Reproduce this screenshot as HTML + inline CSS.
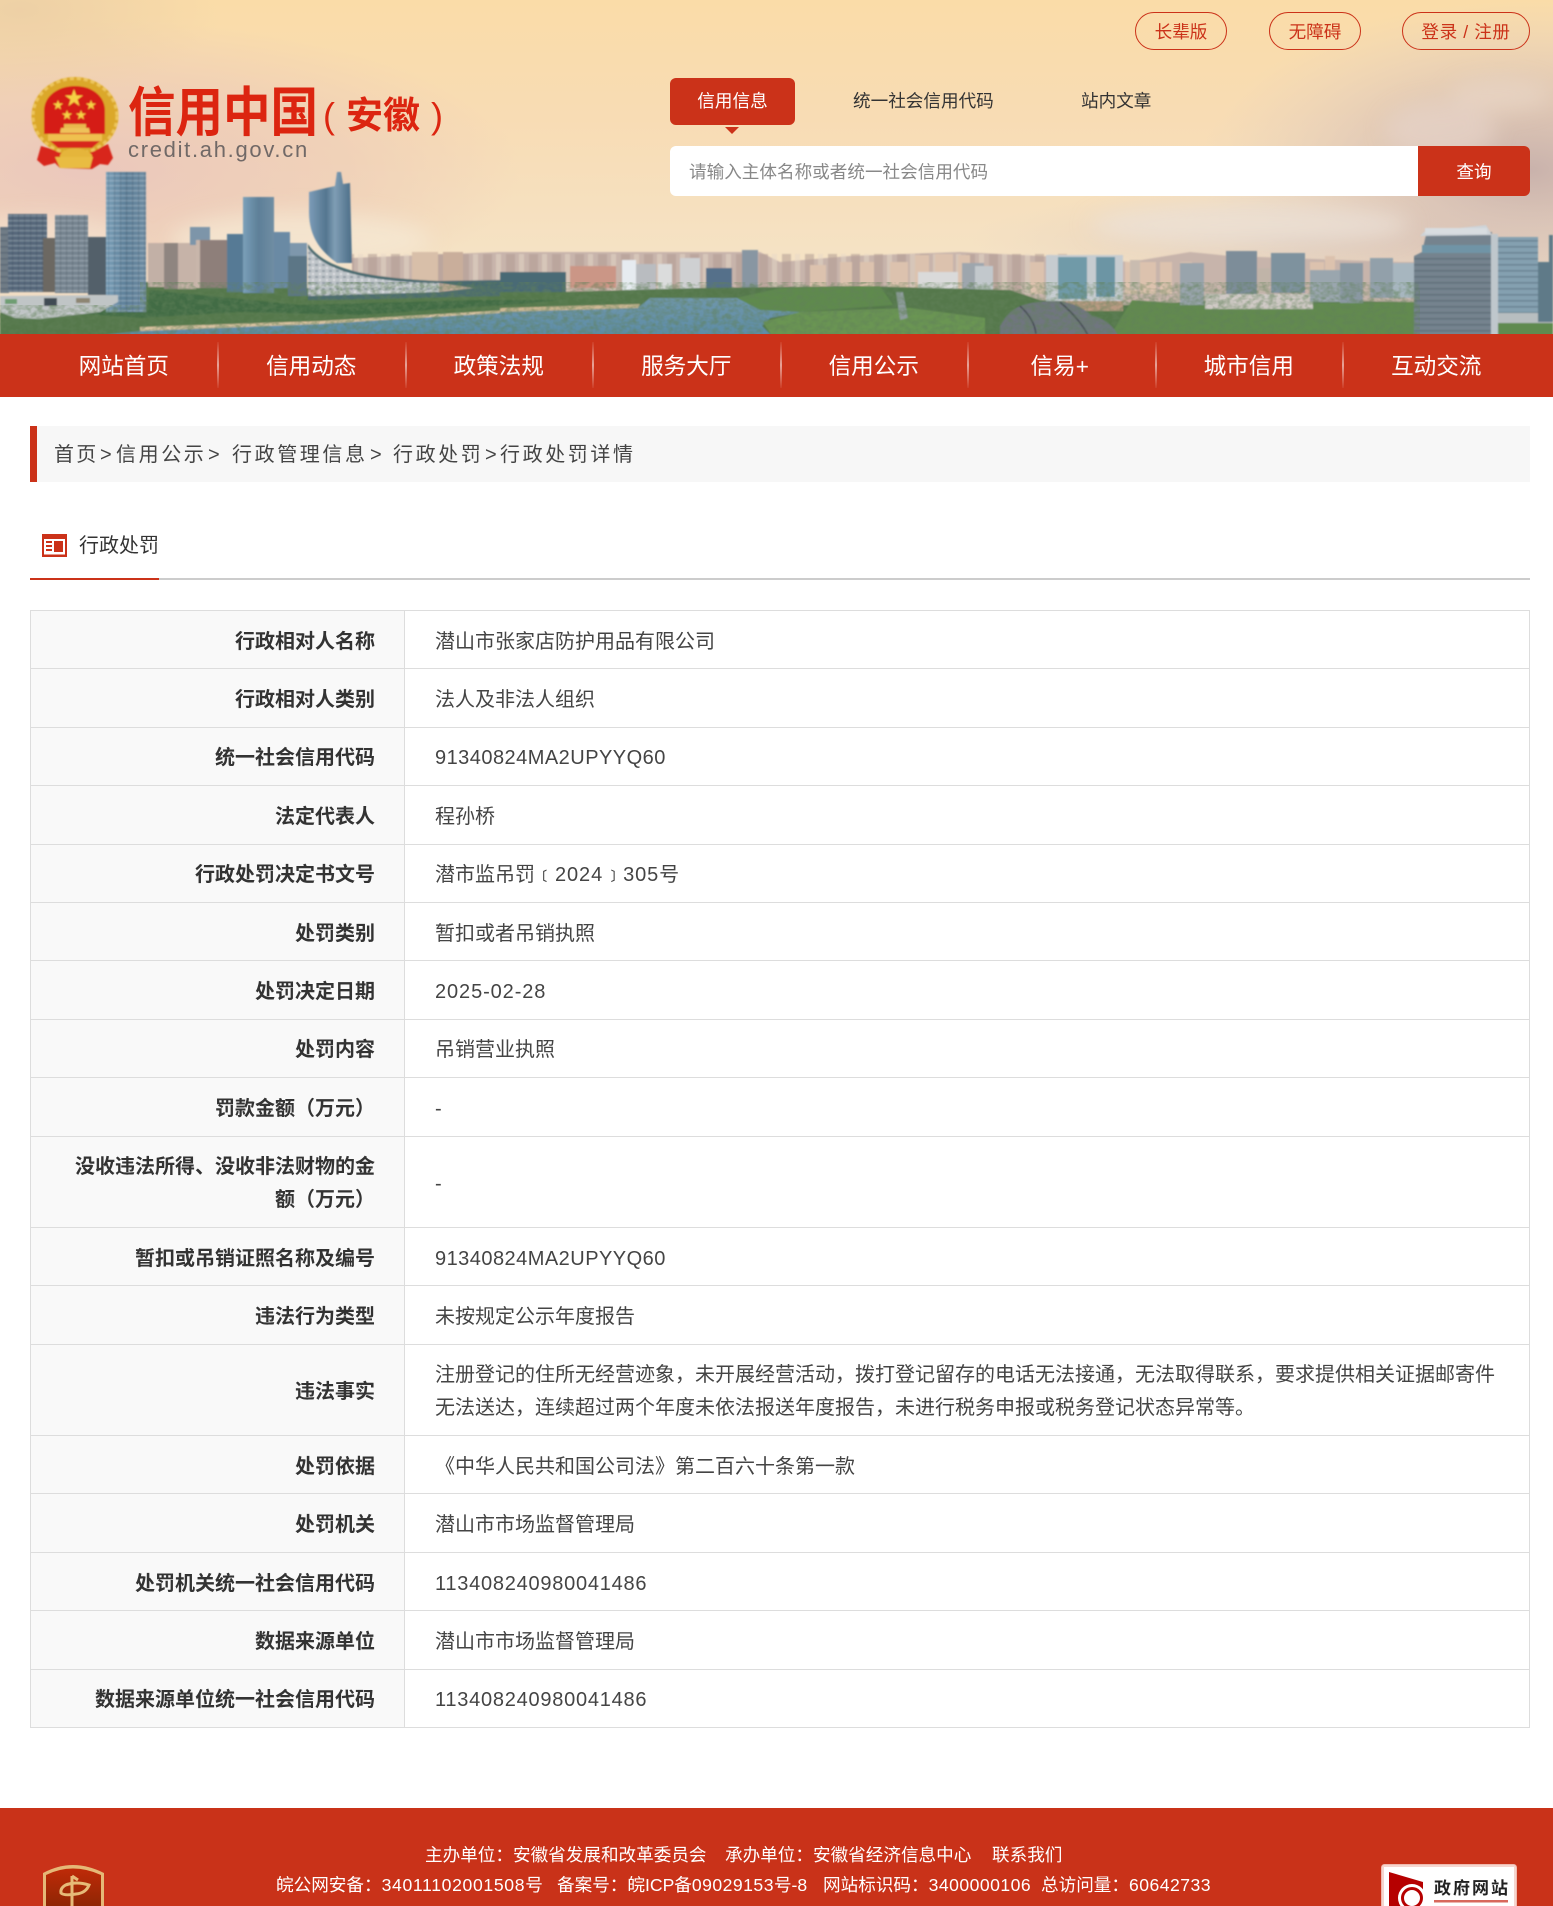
<!DOCTYPE html>
<html lang="zh-CN">
<head>
<meta charset="utf-8">
<title>行政处罚详情</title>
<style>
html,body{margin:0;padding:0;background:#fff}
body{width:1553px;height:1906px;position:relative;overflow:hidden;font-family:"Liberation Sans","Noto Sans CJK SC",sans-serif;color:#333}
.a{position:absolute;white-space:nowrap}
.pill{position:absolute;top:12px;height:38px;box-sizing:border-box;border:1px solid #cb3219;border-radius:19px;color:#cb3219;font-size:17.6px;line-height:38px;text-align:center}
.nav{position:absolute;left:0;top:334px;width:1553px;height:63px;background:#cb3219}
.nav span{position:absolute;top:0;width:187.5px;text-align:center;color:#fff;font-size:22.6px;line-height:66px}
.nav i{position:absolute;top:8px;width:2px;height:46px;background:linear-gradient(to bottom,rgba(255,255,255,.05),rgba(255,255,255,.55) 50%,rgba(255,255,255,.05))}
.bc{position:absolute;top:427px;font-size:20px;line-height:56px;color:#444;letter-spacing:2.6px;white-space:nowrap}
.tbl{position:absolute;left:30px;top:610px;width:1500px;box-sizing:border-box;border:1px solid #ddd;border-bottom:0}
.r{display:flex;height:58.4px;box-sizing:border-box;border-bottom:1px solid #ddd;font-size:20px;line-height:33px}
.r.d{height:91.4px}
.l{width:374px;flex:none;box-sizing:border-box;background:#f9f9f9;border-right:1px solid #ddd;text-align:right;padding:5px 29px 0 0;font-weight:700;color:#333;display:flex;align-items:center;justify-content:flex-end}
.v{flex:1;padding:5px 0 0 30px;color:#444;display:flex;align-items:center}
.n{letter-spacing:.47px}
.m{letter-spacing:.75px}
.t{letter-spacing:.9px}
.foot{position:absolute;left:0;top:1808px;width:1553px;height:98px;background:#c93219;overflow:hidden}
.foot .a{color:#fff;font-size:17.6px;line-height:24px}
</style>
</head>
<body>

<svg class="a" style="left:0;top:0" width="1553" height="336" viewBox="0 0 1553 336" xmlns="http://www.w3.org/2000/svg">
<defs>
<linearGradient id="sky" x1="0" y1="0" x2="0" y2="1"><stop offset="0" stop-color="#fadca8"/><stop offset=".35" stop-color="#f8dcb4"/><stop offset=".75" stop-color="#f5e2c4"/><stop offset="1" stop-color="#f3e6cc"/></linearGradient>
<radialGradient id="pl"><stop offset="0" stop-color="#eac6bc" stop-opacity=".95"/><stop offset=".6" stop-color="#eccab8" stop-opacity=".6"/><stop offset="1" stop-color="#eccab8" stop-opacity="0"/></radialGradient>
<radialGradient id="pr"><stop offset="0" stop-color="#c4adaa" stop-opacity=".9"/><stop offset=".55" stop-color="#d6c0b8" stop-opacity=".55"/><stop offset="1" stop-color="#e0cfc4" stop-opacity="0"/></radialGradient>
<radialGradient id="tl"><stop offset="0" stop-color="#eccfa6" stop-opacity=".9"/><stop offset="1" stop-color="#eccfa6" stop-opacity="0"/></radialGradient>
<linearGradient id="tower" x1="0" y1="0" x2="1" y2="0"><stop offset="0" stop-color="#7ba0b9"/><stop offset=".5" stop-color="#5d7f98"/><stop offset="1" stop-color="#6f8da3"/></linearGradient>
<linearGradient id="curve" x1="0" y1="0" x2="1" y2="0"><stop offset="0" stop-color="#7c9cb8"/><stop offset=".4" stop-color="#54768f"/><stop offset=".6" stop-color="#7f9db4"/><stop offset="1" stop-color="#4a6c86"/></linearGradient>
<linearGradient id="water" x1="0" y1="0" x2="0" y2="1"><stop offset="0" stop-color="#6f96ab"/><stop offset="1" stop-color="#5d8ca6"/></linearGradient>
<pattern id="win" width="6" height="5" patternUnits="userSpaceOnUse"><rect x="0" y="0" width="6" height="1.4" fill="#dfe6ea" opacity=".28"/><rect x="0" y="0" width="1.2" height="5" fill="#2e3e4c" opacity=".2"/></pattern>
<pattern id="lin" width="8" height="6" patternUnits="userSpaceOnUse"><rect x="0" y="0" width="8" height="1.6" fill="#33424f" opacity=".28"/></pattern>
<pattern id="pod" width="7" height="6" patternUnits="userSpaceOnUse"><rect x="0" y="0" width="3" height="2" fill="#5a6b78" opacity=".45"/><rect x="4" y="3" width="2" height="2" fill="#fff" opacity=".5"/></pattern>
<pattern id="far" width="23" height="40" patternUnits="userSpaceOnUse"><rect x="0" width="9" height="40" fill="#b19a92" opacity=".55"/><rect x="13" width="5" height="40" fill="#e8d8c8" opacity=".5"/></pattern>
<filter id="b1"><feGaussianBlur stdDeviation=".7"/></filter>
<filter id="b2"><feGaussianBlur stdDeviation="10"/></filter>
<filter id="noise" x="0" y="0" width="100%" height="100%"><feTurbulence type="fractalNoise" baseFrequency=".16 .2" numOctaves="2" seed="4"/><feColorMatrix type="matrix" values="0 0 0 0 .12  0 0 0 0 .22  0 0 0 0 .1  1.6 1.6 0 0 -1.2"/></filter>
</defs>
<rect width="1553" height="336" fill="url(#sky)"/>
<g>
<ellipse cx="90" cy="170" rx="430" ry="150" fill="url(#pl)"/>
<ellipse cx="20" cy="10" rx="200" ry="90" fill="url(#tl)"/>
<ellipse cx="1530" cy="170" rx="330" ry="170" fill="url(#pr)"/>
<ellipse cx="1300" cy="240" rx="330" ry="55" fill="url(#pr)" opacity=".45"/>
<g filter="url(#b2)">
<ellipse cx="300" cy="240" rx="130" ry="28" fill="#f6e8d4" opacity=".75"/>
<ellipse cx="40" cy="245" rx="100" ry="28" fill="#f4e2d0" opacity=".7"/>
<ellipse cx="1440" cy="130" rx="55" ry="28" fill="#e6d3c8" opacity=".7"/>
<ellipse cx="1500" cy="95" rx="50" ry="16" fill="#e8d5c6" opacity=".7"/>
<ellipse cx="1250" cy="225" rx="160" ry="22" fill="#ece3d8" opacity=".7"/>
</g>
</g>

<g filter="url(#b1)">
<!-- distant hills / skyline -->
<path d="M352 258 L500 252 L760 252 L780 262 L850 256 L960 252 L1080 258 L1130 262 L1190 252 L1230 256 L1400 262 L1553 262 L1553 320 L352 320Z" fill="#c7b4ab"/>
<rect x="352" y="254" width="720" height="40" fill="url(#far)"/>
<g fill="#dcc2ae">
<rect x="810" y="265" width="16" height="36"/><rect x="840" y="262" width="12" height="38"/><rect x="860" y="262" width="14" height="38"/><rect x="890" y="262" width="18" height="38"/><rect x="915" y="255" width="14" height="45"/><rect x="935" y="254" width="18" height="46"/><rect x="958" y="255" width="12" height="45"/>
<rect x="1030" y="262" width="14" height="32"/><rect x="1125" y="262" width="12" height="32"/><rect x="1140" y="262" width="16" height="32"/><rect x="1160" y="262" width="12" height="32"/><rect x="1180" y="262" width="12" height="34"/><rect x="1310" y="262" width="14" height="30"/><rect x="1325" y="256" width="10" height="36"/>
</g>
<rect x="742" y="250" width="16" height="38" fill="#8896a2"/>
<rect x="412" y="252" width="26" height="42" fill="#d8bfa9"/><rect x="443" y="252" width="20" height="42" fill="#c9ae9b"/>
<!-- mid-colour blocks -->
<rect x="500" y="272" width="66" height="26" fill="#4a6a74"/>
<rect x="570" y="266" width="46" height="22" fill="#cb9686"/>
<rect x="622" y="260" width="14" height="30" fill="#e6ebf0"/>
<rect x="636" y="264" width="20" height="26" fill="#b9bcc0"/>
<rect x="658" y="264" width="14" height="26" fill="#dbdcdc"/>
<rect x="680" y="258" width="20" height="32" fill="#cfd0d2"/>
<rect x="706" y="268" width="26" height="20" fill="#55708a"/>
<rect x="918" y="272" width="40" height="24" fill="#dadada"/>
<rect x="962" y="263" width="22" height="34" fill="#9ea6ad"/>
<rect x="975" y="266" width="18" height="30" fill="#c2c8cc"/>
<rect x="908" y="292" width="76" height="14" fill="#c9c6c3"/>
<!-- green -->
<path d="M146 282 L300 288 L420 292 L560 292 L700 288 L860 286 L1010 290 L1040 300 L1125 305 L1230 300 L1420 302 L1420 336 L0 336 L0 310 L110 308Z" fill="#55784b"/>
<path d="M0 312 L60 312 L140 318 L240 312 L360 315 L520 304 L560 300 L480 300 L300 305 L150 290 L146 310 L0 310Z" fill="#436c45"/>
<path d="M1110 336 L1132 300 L1190 304 L1420 302 L1420 336Z" fill="#628a50"/>
<path d="M1500 316 L1553 318 L1553 336 L1490 336Z" fill="#5e8a50"/>
<!-- water -->
<path d="M95 336 L140 331 L320 322 L500 312 L640 306 L650 298 L770 298 L808 311 L770 318 L762 326 L772 336Z" fill="url(#water)"/>
<!-- island -->
<path d="M737 298 L780 288 L880 286 L893 305 L800 312 L760 310Z" fill="#5f8a4e"/>
<path d="M763 322 L800 312 L910 308 L985 318 L985 336 L772 336Z" fill="#6b9552"/>
<path d="M896 292 L903 292 L908 318 L900 320Z" fill="#8e9c9c"/>
<!-- sand -->
<path d="M140 327 L320 321 L500 310.5 L500 313 L320 324 L140 331Z" fill="#d9c2a0"/>
<path d="M500 308 L640 304 L638 308 L500 312Z" fill="#cdb894"/>
<!-- left towers -->
<rect x="0" y="227" width="9" height="66" fill="#6f7c86"/><rect x="0" y="227" width="9" height="66" fill="url(#lin)"/>
<rect x="8" y="214" width="39" height="78" fill="#56687a"/><rect x="8" y="214" width="39" height="78" fill="url(#win)"/>
<rect x="43" y="238" width="12" height="54" fill="#6c6862"/>
<rect x="55" y="215" width="33" height="78" fill="#76848f"/><rect x="55" y="215" width="33" height="78" fill="url(#win)"/>
<rect x="88" y="237" width="18" height="58" fill="#52606a"/>
<rect x="148" y="243" width="16" height="44" fill="#c2b0a6"/><rect x="164" y="243" width="14" height="46" fill="#8f8580"/><rect x="178" y="243" width="18" height="46" fill="#c6b3a8"/>
<rect x="190" y="227" width="20" height="18" fill="#7d95a9"/>
<rect x="196" y="240" width="31" height="48" fill="#8e7f7a"/><rect x="196" y="240" width="4" height="48" fill="#c8b6aa"/>
<rect x="227" y="234" width="16" height="58" fill="#567a95"/>
<rect x="243" y="197" width="31" height="96" fill="url(#tower)"/>
<rect x="274" y="232" width="16" height="56" fill="#6a8aa4"/>
<rect x="290" y="243" width="17" height="16" fill="#7e97ac"/>
<rect x="288" y="256" width="19" height="40" fill="#5c7686"/>
<rect x="106" y="172" width="40" height="140" fill="url(#tower)"/><rect x="106" y="172" width="40" height="140" fill="url(#win)"/>
<!-- curved tower -->
<path d="M309 192 L335 186 L337 172 L341 172 L343 184 L350 183 L352 263 L337 263 C322 252 309 238 309 212Z" fill="url(#curve)"/>
<path d="M308 244 C325 272 370 282 439 282 L439 292 L308 298Z" fill="#bfc5c9"/>
<path d="M308 244 C325 272 370 282 439 282 L439 292 L308 298Z" fill="url(#pod)"/>
<path d="M308 244 C325 270 370 278 439 281 L500 280 L500 292 L439 283 C370 282 325 272 308 248Z" fill="#4a6a70"/>
<path d="M308 296 L439 292 L500 285 L500 296 L330 300 L308 300Z" fill="#4d6d6e"/>
<!-- mall -->
<path d="M0 296 L118 295 L118 302 L100 312 L40 319 L15 318 L0 312Z" fill="#c0c5c6"/>
<rect x="44" y="298" width="13" height="8" fill="#3f4b53"/><rect x="5" y="299" width="12" height="5" fill="#6e9e72"/><rect x="76" y="298" width="14" height="5" fill="#8d8572"/>
<!-- right side buildings -->
<rect x="1046" y="255" width="77" height="46" fill="#c6ccd0"/>
<rect x="1058" y="257" width="29" height="42" fill="#6f9aa8"/>
<rect x="1096" y="257" width="19" height="40" fill="#6c95a4"/>
<rect x="1063" y="301" width="60" height="10" fill="#b79a82"/>
<rect x="1180" y="263" width="24" height="42" fill="#99a4ac"/>
<rect x="1130" y="260" width="10" height="30" fill="#c9bcb0"/>
<rect x="1226" y="251" width="31" height="46" fill="#7d8d99"/>
<rect x="1258" y="268" width="12" height="25" fill="#c0b4a8"/>
<rect x="1271" y="253" width="34" height="40" fill="#7e929e"/>
<rect x="1205" y="294" width="108" height="15" fill="#cfc9c5"/>
<rect x="1340" y="263" width="23" height="40" fill="#8a98a2"/>
<rect x="1370" y="258" width="23" height="40" fill="#92a0aa"/>
<rect x="1393" y="263" width="21" height="35" fill="#a7b6bf"/>
<rect x="1310" y="270" width="30" height="32" fill="#9aa6ae"/>
<!-- opera -->
<path d="M1000 326 C1010 308 1020 303 1050 301 C1075 300 1088 312 1092 316 C1105 318 1115 328 1118 336 L1000 336Z" fill="#70767f"/>
<path d="M1020 306 C1030 315 1035 325 1036 334 M1060 302 C1075 315 1085 328 1088 336" stroke="#3f4550" stroke-width="1.5" fill="none"/>
<!-- big hotel -->
<rect x="1492" y="237" width="46" height="80" fill="#84a0b0"/><rect x="1492" y="237" width="46" height="80" fill="url(#lin)"/>
<rect x="1495" y="313" width="58" height="10" fill="#b8bec0"/>
<rect x="1538" y="262" width="15" height="60" fill="#5f7a88"/><rect x="1549" y="235" width="4" height="30" fill="#5f7a88"/>
<path d="M1426 235 L1492 232 L1492 336 L1414 336 L1414 256 L1422 252Z" fill="#75838e"/>
<rect x="1414" y="256" width="78" height="80" fill="url(#lin)"/>
<rect x="1422" y="245" width="70" height="8" fill="#6f94a6"/>
<path d="M1420 236 L1424 232 L1486 225 L1492 235 Z" fill="#cdd3d8"/>
<rect x="1491" y="234" width="7" height="102" fill="#bfc7cc"/>
<rect x="1425" y="228" width="62" height="6" fill="#d8dde0"/>
</g>
<rect x="140" y="282" width="1280" height="54" filter="url(#noise)" opacity=".5"/>
<rect x="0" y="305" width="140" height="31" filter="url(#noise)" opacity=".5"/>
<!-- emblem -->
<g filter="url(#b1)">
<path d="M41 146 L37 160 L44 166 L55 163 L60 168 L92 169 L100 164 L108 165 L113 158 L108 144 L95 150 L55 150Z" fill="#d8261a"/>
<ellipse cx="75" cy="116" rx="43.5" ry="39" fill="#dba82a"/>
<ellipse cx="75" cy="116" rx="42" ry="37.500" fill="none" stroke="#edc65c" stroke-width="3" stroke-dasharray="4 3"/>
<path d="M44 111 C44 96 58 86 75 86 C92 86 105 96 105 111 L105 134 L44 134Z" fill="#d51f14"/>
<rect x="48" y="134" width="54" height="7" fill="#efc04f"/>
<path d="M50 141 L100 141 L92 148 L58 148Z" fill="#d8261a"/>
<path d="M60 133 L61 128 L89 128 L90 133Z" fill="#eec25a"/>
<rect x="64" y="124" width="22" height="4" fill="#e9b84d"/>
<path d="M60 155 C65 146 85 146 92 155 L92 158 L60 158Z" fill="#e5b53a"/>
<path d="M55 157 L93 157 L90 168 L60 168Z" fill="#e9bc42"/>
<path d="M74 89 L76.300 95.500 L83 95.500 L77.500 99.500 L79.500 106 L74 102 L68.500 106 L70.500 99.500 L65 95.500 L71.700 95.500Z" fill="#f6d144"/>
<path d="M58 100 L59.300 103.500 L63 103.500 L60 105.800 L61 109.500 L58 107.200 L55 109.500 L56 105.800 L53 103.500 L56.700 103.500Z" fill="#f6d144"/>
<path d="M91 100 L92.300 103.500 L96 103.500 L93 105.800 L94 109.500 L91 107.200 L88 109.500 L89 105.800 L86 103.500 L89.700 103.500Z" fill="#f6d144"/>
<path d="M67 110 L68.300 113.500 L72 113.500 L69 115.800 L70 119.500 L67 117.200 L64 119.500 L65 115.800 L62 113.500 L65.700 113.500Z" fill="#f6d144"/>
<path d="M81 110 L82.300 113.500 L86 113.500 L83 115.800 L84 119.500 L81 117.200 L78 119.500 L79 115.800 L76 113.500 L79.700 113.500Z" fill="#f6d144"/>
</g>
<!-- logo text -->
<text transform="translate(128,131) scale(1,1.14)" font-family="'Liberation Sans','Noto Sans CJK SC',sans-serif" font-size="47" font-weight="700" fill="#dc2510" textLength="190" lengthAdjust="spacingAndGlyphs">信用中国</text>
<text x="323" y="128" font-family="'Liberation Sans','Noto Sans CJK SC',sans-serif" font-size="36" fill="#dc2510">(</text>
<text x="346" y="128" font-family="'Liberation Sans','Noto Sans CJK SC',sans-serif" font-size="37" font-weight="700" fill="#dc2510">安徽</text>
<text x="431" y="128" font-family="'Liberation Sans','Noto Sans CJK SC',sans-serif" font-size="36" fill="#dc2510">)</text>
<text x="128" y="157" font-family="'Liberation Sans',sans-serif" font-size="22" letter-spacing="1.7" fill="#716967">credit.ah.gov.cn</text>
</svg>

<div class="pill" style="left:1135px;width:92px">长辈版</div>
<div class="pill" style="left:1269px;width:92px">无障碍</div>
<div class="pill" style="left:1402px;width:128px;letter-spacing:.6px">登录 / 注册</div>

<div class="a" style="left:670px;top:78px;width:125px;height:47px;background:#cb3219;border-radius:6px;color:#fff;font-size:17.6px;line-height:47px;text-align:center">信用信息</div>
<div class="a" style="left:725px;top:127px;width:0;height:0;border-left:7px solid transparent;border-right:7px solid transparent;border-top:7px solid #cb3219"></div>
<div class="a" style="left:853px;top:78px;color:#333;font-size:17.6px;line-height:47px">统一社会信用代码</div>
<div class="a" style="left:1081px;top:78px;color:#333;font-size:17.6px;line-height:47px">站内文章</div>

<div class="a" style="left:670px;top:146px;width:748px;height:50px;background:#fff;border-radius:6px 0 0 6px;color:#888;font-size:17.6px;line-height:52px;text-indent:19px">请输入主体名称或者统一社会信用代码</div>
<div class="a" style="left:1418px;top:146px;width:112px;height:50px;background:#cb3219;border-radius:0 6px 6px 0;color:#fff;font-size:17.6px;line-height:52px;text-align:center">查询</div>

<div class="nav">
<span style="left:30px">网站首页</span><i style="left:217px"></i>
<span style="left:217.5px">信用动态</span><i style="left:405px"></i>
<span style="left:405px">政策法规</span><i style="left:592px"></i>
<span style="left:592.500px">服务大厅</span><i style="left:780px"></i>
<span style="left:780px">信用公示</span><i style="left:967px"></i>
<span style="left:966px">信易+</span><i style="left:1155px"></i>
<span style="left:1155px">城市信用</span><i style="left:1342px"></i>
<span style="left:1342.500px">互动交流</span>
</div>

<div class="a" style="left:30px;top:426px;width:1500px;height:56px;background:#f7f7f7"></div>
<div class="a" style="left:30px;top:426px;width:7px;height:56px;background:#cb3219"></div>
<div class="bc" style="left:54px;letter-spacing:2.2px">首页</div><div class="bc" style="left:100px">&gt;</div>
<div class="bc" style="left:116px">信用公示</div><div class="bc" style="left:208px">&gt;</div>
<div class="bc" style="left:232px">行政管理信息</div><div class="bc" style="left:370px">&gt;</div>
<div class="bc" style="left:393px">行政处罚</div><div class="bc" style="left:485px">&gt;</div>
<div class="bc" style="left:500px">行政处罚详情</div>

<svg class="a" style="left:42px;top:534px" width="25" height="23" viewBox="0 0 25 23" xmlns="http://www.w3.org/2000/svg">
<rect width="25" height="23" fill="#cb3219"/>
<rect x="2" y="5" width="21" height="15.500" fill="#fff"/>
<rect x="4" y="7" width="6" height="2" fill="#cb3219"/><rect x="4" y="11" width="6" height="2" fill="#cb3219"/><rect x="4" y="15" width="6" height="2" fill="#cb3219"/>
<rect x="12" y="7" width="9" height="11" fill="#cb3219"/>
</svg>
<div class="a" style="left:79px;top:531px;font-size:20px;line-height:30px;color:#333">行政处罚</div>
<div class="a" style="left:30px;top:578px;width:1500px;height:2px;background:#ccc"></div>
<div class="a" style="left:30px;top:578px;width:129px;height:2px;background:#cb3219"></div>

<div class="tbl">
<div class="r"><div class="l">行政相对人名称</div><div class="v">潜山市张家店防护用品有限公司</div></div>
<div class="r"><div class="l">行政相对人类别</div><div class="v">法人及非法人组织</div></div>
<div class="r"><div class="l">统一社会信用代码</div><div class="v n">91340824MA2UPYYQ60</div></div>
<div class="r"><div class="l">法定代表人</div><div class="v">程孙桥</div></div>
<div class="r"><div class="l">行政处罚决定书文号</div><div class="v"><div>潜市监吊罚﹝<span class="t">2024</span>﹞<span class="t">305</span>号</div></div></div>
<div class="r"><div class="l">处罚类别</div><div class="v">暂扣或者吊销执照</div></div>
<div class="r"><div class="l">处罚决定日期</div><div class="v t">2025-02-28</div></div>
<div class="r"><div class="l">处罚内容</div><div class="v">吊销营业执照</div></div>
<div class="r"><div class="l">罚款金额（万元）</div><div class="v">-</div></div>
<div class="r d"><div class="l"><div>没收违法所得、没收非法财物的金<br>额（万元）</div></div><div class="v">-</div></div>
<div class="r"><div class="l">暂扣或吊销证照名称及编号</div><div class="v n">91340824MA2UPYYQ60</div></div>
<div class="r"><div class="l">违法行为类型</div><div class="v">未按规定公示年度报告</div></div>
<div class="r d"><div class="l">违法事实</div><div class="v"><div>注册登记的住所无经营迹象，未开展经营活动，拨打登记留存的电话无法接通，无法取得联系，要求提供相关证据邮寄件<br>无法送达，连续超过两个年度未依法报送年度报告，未进行税务申报或税务登记状态异常等。</div></div></div>
<div class="r"><div class="l">处罚依据</div><div class="v">《中华人民共和国公司法》第二百六十条第一款</div></div>
<div class="r"><div class="l">处罚机关</div><div class="v">潜山市市场监督管理局</div></div>
<div class="r"><div class="l">处罚机关统一社会信用代码</div><div class="v m">113408240980041486</div></div>
<div class="r"><div class="l">数据来源单位</div><div class="v">潜山市市场监督管理局</div></div>
<div class="r"><div class="l">数据来源单位统一社会信用代码</div><div class="v m">113408240980041486</div></div>
</div>

<div class="foot">
<div class="a" style="left:425px;top:35px">主办单位：安徽省发展和改革委员会</div>
<div class="a" style="left:725px;top:35px">承办单位：安徽省经济信息中心</div>
<div class="a" style="left:992px;top:35px">联系我们</div>
<div class="a" style="left:276px;top:65px">皖公网安备：<span style="letter-spacing:.66px">34011102001508</span>号</div>
<div class="a" style="left:557px;top:65px">备案号：皖ICP备<span class="n">09029153</span>号-8</div>
<div class="a" style="left:823px;top:65px">网站标识码：<span class="n">3400000106</span></div>
<div class="a" style="left:1041px;top:65px">总访问量：<span class="n">60642733</span></div>

<svg class="a" style="left:42px;top:57px" width="63" height="41" viewBox="0 0 63 41" xmlns="http://www.w3.org/2000/svg">
<defs><linearGradient id="fl" x1="0" y1="0" x2="0" y2="1"><stop offset="0" stop-color="#bf2a08"/><stop offset="1" stop-color="#8f2604"/></linearGradient></defs>
<path d="M1 41 L1 8 Q16 0 31 0 Q46 0 62 8 L62 41Z" fill="#e5b877"/>
<path d="M4 41 L4 10 Q17 3.500 31 3.500 Q45 3.500 59 10 L59 41Z" fill="url(#fl)"/>
<path d="M30 11 L30 41" stroke="#e6ba78" stroke-width="3" fill="none"/>
<path d="M30 11 L36 15 M24 20 Q34 16 47 20 Q44 28 34 29 Q22 31 19 28 Q18 22 26 19" stroke="#e6ba78" stroke-width="3" fill="none"/>
</svg>

<svg class="a" style="left:1381px;top:56px" width="136" height="42" viewBox="0 0 136 42" xmlns="http://www.w3.org/2000/svg">
<rect x=".5" y=".5" width="135" height="60" rx="3" fill="#f5d6cf" stroke="#f0b9ae"/>
<rect x="3" y="3" width="130" height="60" fill="#fff"/>
<path d="M8 8 L42 18 L42 42 L8 42Z" fill="#b60000"/>
<circle cx="31" cy="34" r="14" fill="#fff"/>
<circle cx="31" cy="34" r="9.500" fill="none" stroke="#b60000" stroke-width="3"/>
<rect x="53" y="36" width="74" height="2.500" fill="#d8685c"/>
<text x="53" y="30" font-family="'Noto Sans CJK SC',sans-serif" font-size="17" font-weight="700" letter-spacing="2" fill="#222">政府网站</text>
</svg>
</div>

</body>
</html>
